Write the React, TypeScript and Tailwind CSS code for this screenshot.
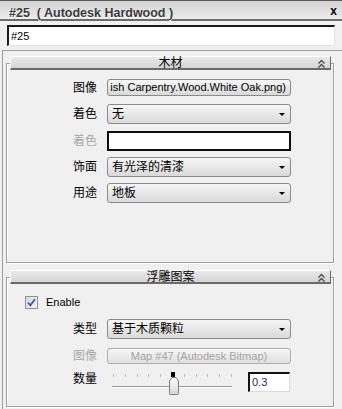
import clsx from "clsx";

const ui = "[font-family:'Liberation_Sans','Noto_Sans_CJK_SC',sans-serif]";

const Chevrons = () => (
  <svg width="7" height="9" viewBox="0 0 7 9">
    <path
      d="M0.5 4.5 L3.5 1.5 L6.5 4.5 M0.5 8.5 L3.5 5.5 L6.5 8.5"
      fill="none"
      stroke="#4d4d4d"
      strokeWidth="1.4"
    />
  </svg>
);

const RolloutHeader = ({ title }: { title: string }) => (
  <div className="-mt-[8px] ml-[3px] grid h-[14px] w-[321px] shrink-0 grid-cols-[1fr_auto_1fr] items-center border-t border-l border-r border-b-2 border-t-white border-l-white border-r-[#6b6b6b] border-b-[#6b6b6b] bg-linear-to-b from-[#e9e9e9] to-[#d5d5d5]">
    <span />
    <span className="text-[12px] leading-[12px] text-black">{title}</span>
    <span className="flex justify-self-end pr-[5px]">
      <Chevrons />
    </span>
  </div>
);

const Label = ({ text, disabled }: { text: string; disabled?: boolean }) => (
  <span
    className={clsx(
      "w-[90px] shrink-0 text-right text-[12px] leading-[14px]",
      disabled ? "text-[#a8a8a8]" : "text-black"
    )}
  >
    {text}
  </span>
);

const Dropdown = ({ value }: { value: string }) => (
  <div className="flex h-[20px] w-[184px] items-center justify-between rounded-[3px] border border-[#8a8a8a] bg-linear-to-b from-[#f7f7f7] to-[#d9d9d9] pl-[4px] pr-[5px]">
    <span className="text-[12px] leading-[14px] text-black">{value}</span>
    <svg width="6" height="3" viewBox="0 0 6 3">
      <polygon points="0,0 6,0 3,3" fill="#000" />
    </svg>
  </div>
);

// 3ds max style slider: tick row, groove, pointed thumb
const Slider = () => {
  const ticks = Array.from({ length: 11 }, (_, i) => 6 + i * 11.8);
  return (
    <svg width="134" height="24" viewBox="0 0 134 24" className="shrink-0">
      <defs>
        <linearGradient id="thumb" x1="0" y1="0" x2="0" y2="1">
          <stop offset="0" stopColor="#ffffff" />
          <stop offset="1" stopColor="#d6d6d6" />
        </linearGradient>
      </defs>
      {ticks.map((x) => (
        <rect key={x} x={Math.round(x)} y="2" width="1" height="3" fill="#bdbdbd" />
      ))}
      <rect x="5" y="14" width="120" height="1" fill="#9c9c9c" />
      <rect x="5" y="15" width="120" height="1" fill="#ffffff" />
      <rect x="64" y="0" width="4" height="5" fill="#000" />
      <path
        d="M62.5 9 L65 5.5 L69 5.5 L71.5 9 L71.5 21.5 Q71.5 22.5 70.5 22.5 L63.5 22.5 Q62.5 22.5 62.5 21.5 Z"
        fill="url(#thumb)"
        stroke="#7d7d7d"
        strokeWidth="1"
      />
    </svg>
  );
};

const CheckBox = () => (
  <svg width="13" height="13" viewBox="0 0 13 13" className="shrink-0">
    <defs>
      <linearGradient id="cb" x1="0" y1="0" x2="1" y2="1">
        <stop offset="0" stopColor="#d3d8de" />
        <stop offset="1" stopColor="#f6f6f6" />
      </linearGradient>
    </defs>
    <rect x="0.5" y="0.5" width="12" height="12" fill="url(#cb)" stroke="#8e9093" />
    <path d="M3 6.5 L5.3 9.3 L10 3.2" fill="none" stroke="#3b5797" strokeWidth="1.8" />
  </svg>
);

const Frame = ({ className, children }: { className: string; children: React.ReactNode }) => (
  <section
    className={clsx(
      "flex w-[328px] shrink-0 flex-col border border-[#a0a0a0] shadow-[inset_1px_1px_0_#fff,1px_1px_0_#fff]",
      className
    )}
  >
    {children}
  </section>
);

export default function App() {
  return (
    <div className={clsx("flex h-[409px] w-[342px] flex-col overflow-hidden bg-[#f0f0f0]", ui)}>
      {/* title bar */}
      <div className="flex h-[21px] shrink-0 items-start justify-between border-t border-b-2 border-t-[#5a5a5a] border-b-[#6d6d6d] bg-linear-to-b from-[#d3d3d3] to-[#ebebeb] pl-[9px] pr-[5px]">
        <span className="mt-[5px] whitespace-pre text-[12.5px] font-bold leading-[14px] text-[#3a3a3a] [text-shadow:0_1px_0_#fff]">
          #25  ( Autodesk Hardwood )
        </span>
        <span className="mt-[3px] text-[12px] font-bold leading-[14px] text-black">x</span>
      </div>

      <div className="mx-[7px] mt-[4px] flex h-[21px] shrink-0 items-center border-t-2 border-l-2 border-r border-b border-t-[#1a1a1a] border-l-[#1a1a1a] border-r-[#e2e2e2] border-b-[#e2e2e2] bg-white pl-[2px]">
        <span className="text-[11px] leading-[13px] text-black">#25</span>
      </div>

      <div className="ml-[2px] mt-[4px] flex flex-1 flex-col border-t border-l border-[#9f9f9f] pl-[3px]">
        <Frame className="mt-[12px] h-[200px]">
          <RolloutHeader title="木材" />

          <div className="mt-[9px] flex items-center gap-[10px]">
            <Label text="图像" />
            <div className="flex h-[17px] w-[184px] items-center justify-end overflow-hidden rounded-[3px] border border-[#8a8a8a] bg-linear-to-b from-[#f7f7f7] to-[#d9d9d9] pr-[4px]">
              <span className="shrink-0 whitespace-nowrap text-[11px] leading-[13px] text-black">
                ish Carpentry.Wood.White Oak.png)
              </span>
            </div>
          </div>

          <div className="mt-[8px] flex items-center gap-[10px]">
            <Label text="着色" />
            <Dropdown value="无" />
          </div>

          <div className="mt-[7px] flex items-center gap-[10px]">
            <Label text="着色" disabled />
            <div className="h-[20px] w-[184px] border-2 border-[#0d0d0d] bg-white" />
          </div>

          <div className="mt-[6px] flex items-center gap-[10px]">
            <Label text="饰面" />
            <Dropdown value="有光泽的清漆" />
          </div>

          <div className="mt-[6px] flex items-center gap-[10px]">
            <Label text="用途" />
            <Dropdown value="地板" />
          </div>
        </Frame>

        <Frame className="mt-[14px] h-[130px]">
          <RolloutHeader title="浮雕图案" />

          <div className="ml-[18px] mt-[12px] flex h-[13px] items-center gap-[8px]">
            <CheckBox />
            <span className="text-[11px] leading-[13px] text-black">Enable</span>
          </div>

          <div className="mt-[10px] flex items-center gap-[10px]">
            <Label text="类型" />
            <Dropdown value="基于木质颗粒" />
          </div>

          <div className="mt-[9px] flex items-center gap-[10px]">
            <Label text="图像" disabled />
            <div className="flex h-[16px] w-[184px] items-center justify-center rounded-[3px] border border-[#aeb1b4] bg-linear-to-b from-[#f6f6f6] to-[#e0e0e0]">
              <span className="whitespace-nowrap text-[11px] leading-[13px] text-[#a4a4a4]">
                Map #47 (Autodesk Bitmap)
              </span>
            </div>
          </div>

          <div className="mt-[8px] flex items-start gap-[10px]">
            <Label text="数量" />
            <div className="flex items-start">
              <Slider />
              <div className="ml-[7px] flex h-[20px] w-[42px] items-center border-t-2 border-l-2 border-r border-b border-t-[#111] border-l-[#111] border-r-[#dadada] border-b-[#dadada] bg-white pl-[2px]">
                <span className="text-[11px] leading-[13px] text-[#1e1e66]">0.3</span>
              </div>
            </div>
          </div>
        </Frame>
      </div>
    </div>
  );
}
